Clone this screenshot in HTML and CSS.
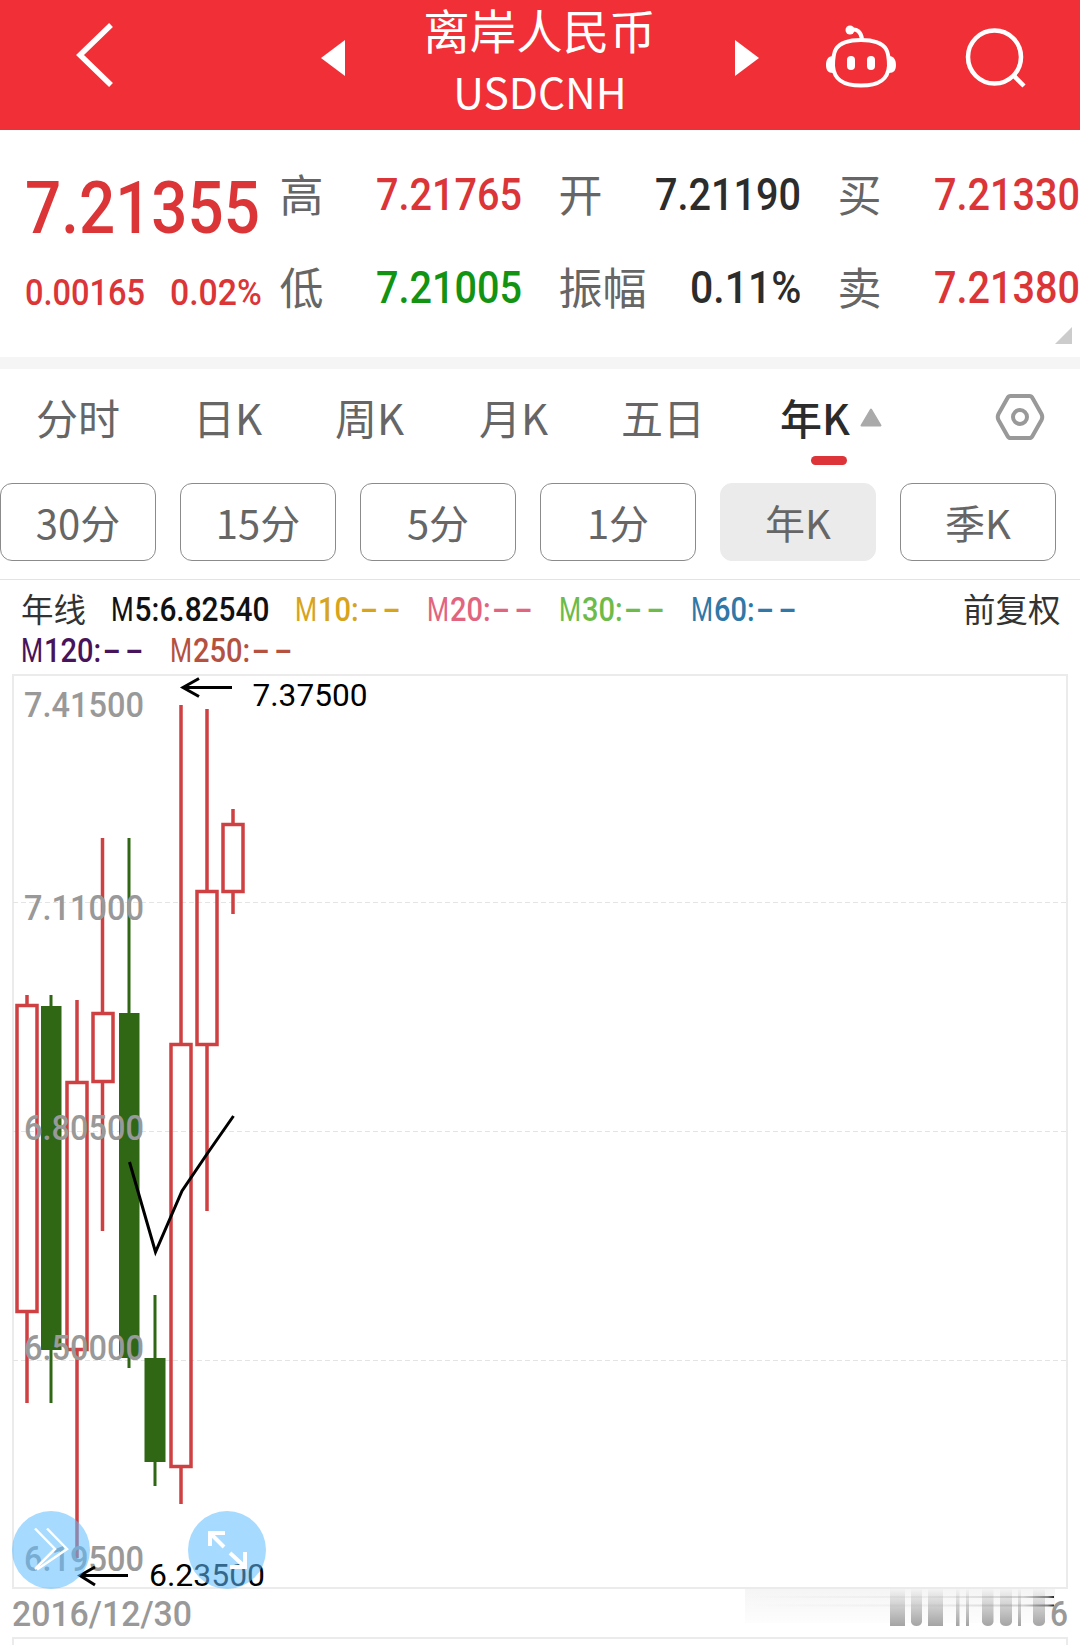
FILE: index.html
```html
<!DOCTYPE html>
<html lang="zh-CN">
<head>
<meta charset="utf-8">
<title>离岸人民币 USDCNH</title>
<link rel="stylesheet" href="styles.css">
</head>
<body>
<header class="topbar">
  <svg class="icon" width="42" height="70" viewBox="0 0 42 70"><path d="M35 5 4 35l31 30" fill="none" stroke="#fff" stroke-width="5.500"/></svg>
  <svg class="icon" width="24" height="36" viewBox="0 0 24 36"><path d="M24 0v36L0 18z" fill="#fff"/></svg>
  <div class="title"><div class="name">离岸人民币</div><div class="code">USDCNH</div></div>
  <svg class="icon" width="24" height="36" viewBox="0 0 24 36"><path d="M0 0v36l24-18z" fill="#fff"/></svg>
  <svg class="icon" width="70" height="66" viewBox="826 24 70 66">
    <g fill="none" stroke="#fff" stroke-width="4">
      <path d="M861 40C875 40 882 43 886 49C889 54 889 61 889 66C888 79 880 85.500 861 85.500C842 85.500 834 79 833 66C833 61 833 54 836 49C840 43 847 40 861 40Z"/>
      <path d="M850 30C857 28 861 32 862 39"/>
    </g>
    <g fill="#fff"><circle cx="850" cy="30" r="4.500"/><rect x="847" y="56" width="8" height="14" rx="4"/><rect x="867" y="56" width="8" height="14" rx="4"/><path d="M833 56C828 56 826 60 826 65s2 8 7 8zM889 56c5 0 7 4 7 9s-2 8-7 8z"/></g>
  </svg>
  <svg class="icon" width="62" height="62" viewBox="964 26 62 62"><g fill="none" stroke="#fff" stroke-width="4.500"><circle cx="994.500" cy="57" r="26.500"/><path d="M1013 75l11 11"/></g></svg>
</header>

<section class="quote">
  <div class="last">
    <div class="price num red">7.21355</div>
    <div class="change red"><span class="num">0.00165</span><span class="num">0.02%</span></div>
  </div>
  <div class="stat"><span>高</span><b class="num red">7.21765</b></div>
  <div class="stat"><span>开</span><b class="num">7.21190</b></div>
  <div class="stat"><span>买</span><b class="num red">7.21330</b></div>
  <div class="stat"><span>低</span><b class="num green">7.21005</b></div>
  <div class="stat"><span>振幅</span><b class="num pct">0.11%</b></div>
  <div class="stat"><span>卖</span><b class="num red">7.21380</b></div>
  <i class="corner"></i>
</section>

<nav class="tabs">
  <span>分时</span><span>日K</span><span>周K</span><span>月K</span><span>五日</span>
  <span class="active">年K<svg width="22" height="19" viewBox="0 0 22 19"><path d="M11 1.500 20.500 17.500h-19z" fill="#aaa" stroke="#aaa" stroke-width="2" stroke-linejoin="round"/></svg></span>
  <svg width="50" height="48" viewBox="0 0 50 48"><path d="M15.500 3h19q2 0 3 2l9 16q1.500 3 0 6l-9 16q-1 2-3 2h-19q-2 0-3-2l-9-16q-1.500-3 0-6l9-16q1-2 3-2z" fill="none" stroke="#999" stroke-width="4"/><circle cx="25" cy="24" r="7" fill="none" stroke="#999" stroke-width="4"/></svg>
</nav>
<div class="chips">
  <span>30分</span><span>15分</span><span>5分</span><span>1分</span><span class="on">年K</span><span>季K</span>
</div>

<section class="legend">
  <div class="row main">
    <span class="cjk">年线</span>
    <span class="num m5"><i>M</i>5:6.82540</span>
    <span class="num m10"><i>M</i>10:<u>--</u></span>
    <span class="num m20"><i>M</i>20:<u>--</u></span>
    <span class="num m30"><i>M</i>30:<u>--</u></span>
    <span class="num m60"><i>M</i>60:<u>--</u></span>
    <span class="cjk adj">前复权</span>
  </div>
  <div class="row sub">
    <span class="num m120"><i>M</i>120:<u>--</u></span>
    <span class="num m250"><i>M</i>250:<u>--</u></span>
  </div>
</section>

<svg class="chart" width="1080" height="975" viewBox="0 670 1080 975">
  <defs>
    <linearGradient id="bar" x1="0" y1="0" x2="0" y2="1"><stop offset="0" stop-color="#f3f3f3"/><stop offset="1" stop-color="#a4a4a4"/></linearGradient>
    <linearGradient id="haze" x1="0" y1="0" x2="0" y2="1"><stop offset="0" stop-color="#f5f5f5"/><stop offset="1" stop-color="#fdfdfd"/></linearGradient>
    <linearGradient id="streak" gradientUnits="userSpaceOnUse" x1="745" y1="0" x2="1054" y2="0"><stop offset="0" stop-color="#888" stop-opacity="0"/><stop offset=".6" stop-color="#888" stop-opacity=".1"/><stop offset=".9" stop-color="#777" stop-opacity=".3"/><stop offset=".98" stop-color="#666" stop-opacity=".8"/><stop offset="1" stop-color="#222"/></linearGradient>
  </defs>
  <g fill="none" stroke="#ebebeb" stroke-width="2">
    <path d="M13 675H1067V1588H13zM13 1645V1638H1067V1645"/>
    <path d="M13 902.500H1067M13 1131.500H1067M13 1360.500H1067" stroke="#e4e4e4" stroke-width="1" stroke-dasharray="5 3"/>
  </g>
  <g fill="none" stroke="#cf4042" stroke-width="3.500">
    <path d="M27 995V1005M27 1312V1403M77 1000V1082M77 1350V1558M102.500 838V1013M102.500 1082V1231M181 705V1044M181 1467V1504M207 709V891M207 1045V1211M233 809V824M233 892V914"/>
    <path d="M17 1005.500H37V1311.500H17zM67 1082.500H87V1349.500H67zM93 1013.500H113V1081.500H93zM171 1044.500H191V1466.500H171zM197 891.500H217V1044.500H197zM223 824.500H243V891.500H223z"/>
  </g>
  <g fill="#2f6714">
    <path d="M49.500 995h3v408h-3zM41 1006h20.500v344H41zM127.500 838h3v530h-3zM119 1013h20.500v345H119zM153.500 1295h3v191h-3zM144.500 1358h21v104h-21z"/>
  </g>
  <g class="scale">
    <text x="24" y="717" textLength="120" lengthAdjust="spacingAndGlyphs">7.41500</text>
    <text x="24" y="920" textLength="120" lengthAdjust="spacingAndGlyphs">7.11000</text>
    <text x="24" y="1140" textLength="120" lengthAdjust="spacingAndGlyphs">6.80500</text>
    <text x="24" y="1360" textLength="120" lengthAdjust="spacingAndGlyphs">6.50000</text>
    <text x="24" y="1571" textLength="120" lengthAdjust="spacingAndGlyphs">6.19500</text>
    <text x="12" y="1626" textLength="180" lengthAdjust="spacingAndGlyphs">2016/12/30</text>
  </g>
  <g fill="none" stroke="#000" stroke-width="3">
    <path d="M129.500 1162 155.500 1252 182 1191 207 1154 233.500 1116"/>
    <path d="M183 687.500H232M199 678.500 183 687.500 199 696.500M80 1575.500H128M95 1567 80 1575.500 95 1585"/>
  </g>
  <g class="mark">
    <text x="252.500" y="706" textLength="115" lengthAdjust="spacingAndGlyphs">7.37500</text>
    <text x="149" y="1586" textLength="116" lengthAdjust="spacingAndGlyphs">6.23500</text>
  </g>
  <g fill="#5dbcfd" fill-opacity=".55"><circle cx="51" cy="1550" r="39"/><circle cx="227" cy="1550" r="39"/></g>
  <g fill="none" stroke="#fff">
    <path d="M35 1528.500 55 1549 35 1569M47 1528.500 67 1549 37 1569.500" stroke-width="2.500"/>
    <path d="M210 1546V1533H225M211 1534 224 1547M245 1552V1567H230M244 1566 230 1553" stroke-width="4"/>
  </g>
  <rect x="745" y="1589" width="310" height="34" fill="url(#haze)"/>
  <g fill="url(#bar)">
    <path d="M890 1589h15v37h-15z"/><path d="M911 1589h11v33q-1 4-5.500 4t-5.500-4z"/><path d="M928 1589h15v37h-15z"/>
    <path d="M956 1589h3.500v37h-3.500z"/><path d="M966 1589h3v37h-3z"/><path d="M982 1589h11.500v33q-1 4-5.500 4t-6-4z"/>
    <path d="M1000 1589h12v33q-1 4-6 4t-6-4z"/><path d="M1018 1589h3v37h-3z"/><path d="M1033 1589h12v33q-1 4-6 4t-6-4z"/>
  </g>
  <path d="M745 1596h309v2H745zM745 1604.500h309v2H745z" fill="url(#streak)"/>
  <g class="scale"><text x="1050" y="1626" textLength="18" lengthAdjust="spacingAndGlyphs">6</text></g>
</svg>
</body>
</html>
```
FILE: styles.css
```css
* { box-sizing: border-box; }
body {
  margin: 0;
  width: 1080px;
  height: 1645px;
  overflow: hidden;
  background: #fff;
  color: #666;
  font-family: "Noto Sans CJK SC", sans-serif;
}
svg { display: block; }
i, u { font-style: normal; text-decoration: none; }

.topbar {
  display: grid;
  grid-template-columns: 245px 25px 391px 91px 139px 100px;
  height: 130px;
  padding-left: 76px;
  padding-top: 20px;
  background: #f12f37;
  color: #fff;
  align-items: start;
}
.topbar .icon:nth-of-type(2) { margin-top: 20px; }
.topbar .icon:nth-of-type(3) { margin-top: 20px; margin-left: -2px; }
.topbar .icon:nth-of-type(4) { margin-top: 4px; margin-left: -2px; }
.topbar .icon:nth-of-type(5) { margin-top: 6px; margin-left: -3px; }
.title { margin-top: -20px; text-align: center; }
.name { font-size: 46.5px; line-height: 58px; padding-right: 4px; font-weight: 400; }
.code { font-size: 42.5px; line-height: 66px; padding-right: 3px; font-weight: 400; }

.num {
  display: inline-block;
  font-family: Roboto, sans-serif;
  font-weight: 500;
  white-space: nowrap;
  transform: scaleX(.88);
  transform-origin: left;
}
.red { color: #db3538; }
.green { color: #129312; }

.quote {
  position: relative;
  display: grid;
  grid-template-columns: 243px 242px 242px 242px;
  grid-template-rows: 93px 93px;
  column-gap: 37px;
  height: 227px;
  padding-top: 17px;
}
.last { grid-row: span 2; padding-left: 25px; }
.price { font-size: 73px; line-height: 80px; margin-top: 21px; transform: scaleX(.873); }
.change { display: flex; margin-top: 22px; font-size: 37.5px; line-height: 44px; }
.change .num { flex: none; }
.change .num:first-child { width: 145px; transform: scaleX(.868); }
.change .num:last-child { transform: scaleX(.9); }
.stat {
  display: flex;
  justify-content: space-between;
  align-items: center;
  font-size: 44px;
  line-height: 60px;
}
.stat span { transform: translate(-.5px, -1px); }
.stat .num { font-size: 45px; padding-top: 3px; transform-origin: right; }
.stat .pct { transform: scaleX(.91); }
.stat .num:not(.red):not(.green) { color: #2c2c2c; }
.corner {
  position: absolute;
  right: 8px;
  bottom: 13px;
  width: 17px;
  height: 17px;
  background: #ccc;
  clip-path: polygon(100% 0, 100% 100%, 0 100%);
}

.tabs {
  display: grid;
  grid-template-columns: 157px 142px 144px 142px 159px 213px 50px;
  height: 126px;
  padding: 13px 0 0 36px;
  border-top: 12px solid #f5f5f5;
  font-size: 42px;
  line-height: 70px;
}
.tabs > svg { margin-top: 11px; margin-left: 2px; }
.active { position: relative; display: flex; gap: 10px; color: #2b2b2b; font-weight: 500; }
.active svg { margin-top: 26px; }
.active::after {
  content: "";
  position: absolute;
  left: 31px;
  top: 74px;
  width: 36px;
  height: 9px;
  border-radius: 5px;
  background: #dc3438;
}

.chips {
  display: grid;
  grid-template-columns: repeat(6, 156px);
  grid-template-rows: 78px;
  gap: 24px;
  height: 97px;
  border-bottom: 1px solid #e3e3e3;
  font-size: 40px;
  line-height: 76px;
  text-align: center;
}
.chips span { border: 1px solid #8b8b8b; border-radius: 12px; }
.chips .on { background: #ebebeb; border-color: #ebebeb; }

.legend { height: 90px; font-size: 33px; line-height: 40px; }
.row { display: grid; padding-left: 21px; }
.main { grid-template-columns: 90px 184px 132px 132px 132px 272px auto; height: 50px; padding-top: 10px; }
.sub { grid-template-columns: 149px auto; padding-top: 1px; }
.legend .cjk { font-size: 32.5px; color: #333; margin-top: -2px; height: 42px; }
.legend .num { height: 40px; }
.legend .m5 { transform: scaleX(.905); }
.legend i { display: inline-block; font-weight: 400; width: 26px; transform: scaleX(.87); transform-origin: left; }
.legend u { display: inline-block; letter-spacing: 2.5px; transform: scaleX(1.85); transform-origin: left; margin-left: 2px; }
.m5 { color: #111; }
.m10 { color: #d7a41c; }
.m20 { color: #e2657f; }
.m30 { color: #6dbb48; }
.m60 { color: #2f78a8; }
.m120 { color: #47135a; }
.m250 { color: #b4523f; }

.scale { font: 500 35px Roboto, sans-serif; fill: #999; }
.mark { font: 400 31px Roboto, sans-serif; fill: #000; }
```
